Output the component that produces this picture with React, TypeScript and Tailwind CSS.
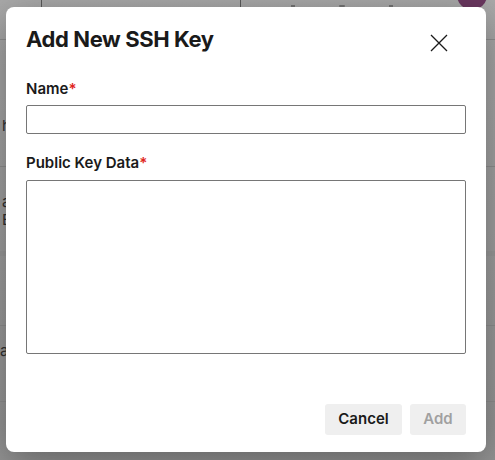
import React from 'react';

const font = { fontFamily: 'Inter, "Liberation Sans", sans-serif' };

const CloseIcon: React.FC = () => (
  <svg width="18" height="18" viewBox="0 0 18 18" fill="none" stroke="#1a1a1a" strokeWidth="1.3">
    <path d="M1 1L17 17M17 1L1 17" />
  </svg>
);

const Backdrop: React.FC = () => (
  <div className="h-full w-full bg-gradient-to-b from-[#c8c8c8] to-[#b0b0b0] text-[#3a3a3a]">
    {/* top bar */}
    <div className="flex h-[40px] items-start border-b border-[#a9a9a9]">
      <div className="h-[8px] w-[42px] border-r border-[#6a6a6a]" />
      <div className="h-[8px] w-[199px] border-r border-[#6a6a6a]" />
      <div className="flex flex-1 items-start justify-end gap-[44px] pr-[8px]">
        <span className="mt-[5px] h-[2px] w-[4px] bg-[#8a8a8a]" />
        <span className="mt-[5px] h-[2px] w-[6px] rounded-full bg-[#8a8a8a]" />
        <span className="mt-[5px] mr-[20px] h-[2px] w-[4px] bg-[#8a8a8a]" />
        <span className="-mt-[20px] h-[30px] w-[30px] rounded-full bg-[#7d4170]" />
      </div>
    </div>
    <div className="pl-[2px] pt-[78px] text-[15px] leading-[16px]">
      <div>h</div>
      <div className="pl-[6px]">D</div>
    </div>
    <div className="mt-[16px] border-t border-[#a9a9a9] pt-[26px] pl-[2px] text-[15px] leading-[18px]">
      <div>a</div>
      <div>E</div>
    </div>
    <div className="mt-[22px] h-[5px] bg-[#b5b5b5]" />
    <div className="h-[70px] border-b border-[#a9a9a9]" />
    <div className="pt-[14px] text-[15px]">a</div>
    <div className="mt-[38px] border-t border-[#a9a9a9]" />
  </div>
);

export default function App() {
  return (
    <div className="relative h-[460px] w-[495px] overflow-hidden" style={font}>
      <Backdrop />
      <div className="absolute inset-0 bg-black/15" />
      <div className="absolute left-[6px] top-[7px] flex h-[445px] w-[480px] flex-col rounded-[8px] bg-white px-[20px] shadow-[0_10px_40px_rgba(0,0,0,0.35)]">
        <div className="flex items-center justify-between pt-[17px]">
          <h2 className="text-[22px] font-bold leading-[30px] tracking-[-0.4px] text-[#1a1a1a]">Add New SSH Key</h2>
          <button className="mr-[18px] mt-[8px]">
            <CloseIcon />
          </button>
        </div>
        <label className="mt-[26px] text-[15px] font-semibold leading-[18px] text-[#1a1a1a]">
          Name<span className="text-[#e0251b]">*</span>
        </label>
        <input className="mt-[7px] h-[29px] w-full rounded-[2px] border border-[#767676] outline-none" />
        <label className="mt-[20px] text-[15px] font-semibold leading-[18px] text-[#1a1a1a]">
          Public Key Data<span className="text-[#e0251b]">*</span>
        </label>
        <textarea className="mt-[8px] h-[174px] w-full resize-none rounded-[2px] border border-[#767676] outline-none" />
        <div className="mt-[50px] flex justify-end gap-[8px]">
          <button className="h-[31px] w-[77px] rounded-[3px] bg-[#efefef] text-[15px] font-semibold text-[#1a1a1a]">
            Cancel
          </button>
          <button className="h-[31px] w-[56px] rounded-[3px] bg-[#efefef] text-[15px] font-semibold text-[#a0a0a0]">
            Add
          </button>
        </div>
      </div>
    </div>
  );
}
